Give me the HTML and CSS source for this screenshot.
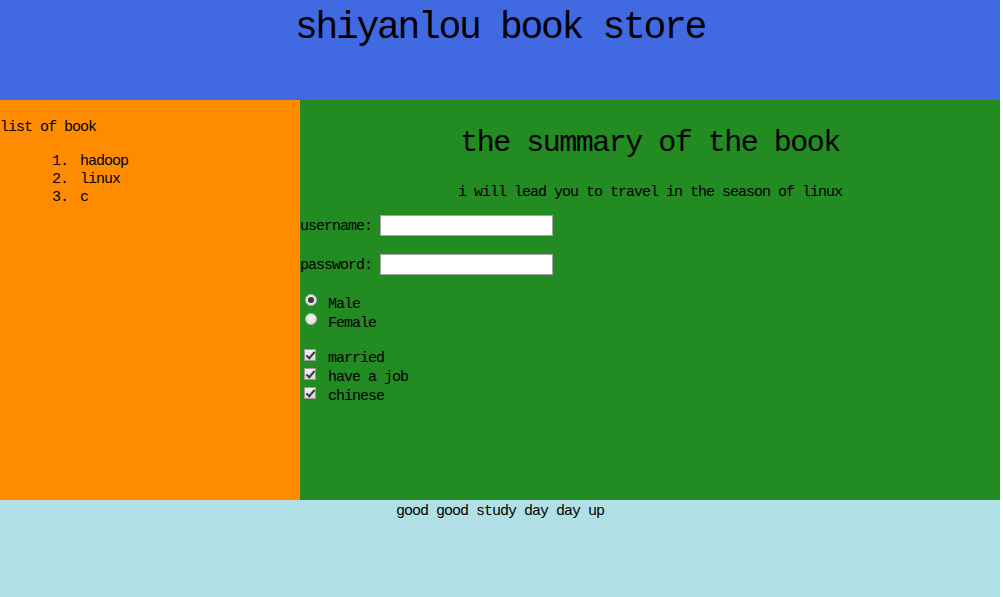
FILE: index.html
```html
<!DOCTYPE html>
<html>
<head>
<meta charset="utf-8">
<title>shiyanlou book store</title>
<link rel="stylesheet" href="styles.css">
</head>
<body>
<div class="page">
  <header class="header">
    <h1 class="title">shiyanlou book store</h1>
  </header>
  <div class="content">
    <aside class="side">
      <p class="side-title">list of book</p>
      <ol class="books">
        <li>hadoop</li>
        <li>linux</li>
        <li>c</li>
      </ol>
    </aside>
    <main class="main">
      <h2 class="summary">the summary of the book</h2>
      <p class="lead">i will lead you to travel in the season of linux</p>
      <form class="form">
        <div class="field">
          <label class="label" for="username">username:</label>
          <input class="text-input" id="username" type="text">
        </div>
        <div class="field field-pass">
          <label class="label" for="password">password:</label>
          <input class="text-input" id="password" type="password">
        </div>
        <div class="options options-radio">
          <label class="option"><input class="radio" type="radio" name="sex" checked><span>Male</span></label>
          <label class="option"><input class="radio" type="radio" name="sex"><span>Female</span></label>
        </div>
        <div class="options options-check">
          <label class="option"><input class="check" type="checkbox" checked><span>married</span></label>
          <label class="option"><input class="check" type="checkbox" checked><span>have a job</span></label>
          <label class="option"><input class="check" type="checkbox" checked><span>chinese</span></label>
        </div>
      </form>
    </main>
  </div>
  <footer class="footer">
    <p class="motto">good good study day day up</p>
  </footer>
</div>
</body>
</html>
```

FILE: styles.css
```css
html, body {
  margin: 0;
  padding: 0;
  background: #ffffff;
}

body {
  font-family: "Liberation Mono", "DejaVu Sans Mono", monospace;
  font-size: 15px;
  line-height: 18px;
  letter-spacing: -1px;
  color: #000000;
}

.page {
  width: 1000px;
}

.header {
  height: 100px;
  background: #4169e1;
}

.title {
  margin: 0;
  padding-top: 4px;
  font-size: 38px;
  line-height: 48px;
  letter-spacing: -2.3px;
  font-weight: normal;
  text-align: center;
}

.content {
  display: flex;
  height: 400px;
}

.side {
  width: 300px;
  background: #ff8c00;
}

.side-title {
  margin: 19px 0 0;
}

.books {
  list-style: none;
  counter-reset: book;
  margin: 16px 0 0;
  padding: 0 0 0 52px;
}

.books li {
  counter-increment: book;
}

.books li::before {
  content: counter(book) ".";
  display: inline-block;
  width: 28px;
}

.main {
  flex: 1;
  background: #228b22;
}

.summary {
  margin: 25px 0 0;
  font-size: 30px;
  line-height: 36px;
  letter-spacing: -1.5px;
  font-weight: normal;
  text-align: center;
}

.lead {
  margin: 23px 0 0;
  text-align: center;
}

.form {
  margin: 0;
}

.field {
  display: flex;
  align-items: center;
  gap: 8px;
  margin-top: 13px;
  height: 21px;
}

.label {
  padding-top: 2px;
}

.field-pass {
  margin-top: 18px;
}

.text-input {
  box-sizing: border-box;
  width: 173px;
  height: 21px;
  margin: 0;
  padding: 1px 2px;
  border: 1px solid #a5a5a5;
  background: #ffffff;
  font: inherit;
}

.options {
  display: flex;
  flex-direction: column;
}

.options-radio {
  margin-top: 19px;
}

.options-check {
  margin-top: 16px;
}

.option {
  display: flex;
  align-items: flex-start;
  height: 19px;
  line-height: 19px;
}

.option span {
  padding-top: 1px;
}

.radio,
.check {
  appearance: none;
  -webkit-appearance: none;
  box-sizing: border-box;
  width: 12px;
  height: 12px;
  margin: 0 11px 0 5px;
  flex: none;
  position: relative;
}

.radio {
  border-radius: 50%;
  border: 1px solid #b5b5b5;
  background: radial-gradient(circle at 50% 40%, #f4f4f4 0%, #dcdcdc 100%);
}

.radio:checked::after {
  content: "";
  position: absolute;
  left: 2px;
  top: 2px;
  width: 6px;
  height: 6px;
  border-radius: 50%;
  background: #3c3c3c;
}

.check {
  margin-top: 1px;
  margin-left: 4px;
  margin-right: 12px;
  border: 1px solid #9a9a9a;
  background: linear-gradient(#f2f2f2, #d8d8d8);
}

.check:checked::after {
  content: "";
  position: absolute;
  left: 3px;
  top: 0px;
  width: 3px;
  height: 7px;
  border-right: 2px solid #3a3a3a;
  border-bottom: 2px solid #3a3a3a;
  transform: rotate(40deg);
}

.footer {
  height: 100px;
  background: #b0e0e6;
}

.motto {
  margin: 0;
  padding-top: 3px;
  text-align: center;
}
```
